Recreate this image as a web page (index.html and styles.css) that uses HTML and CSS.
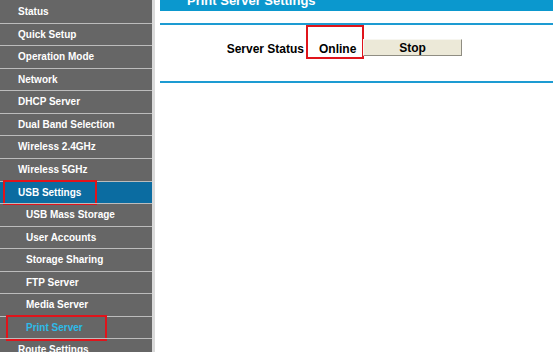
FILE: index.html
```html
<!DOCTYPE html>
<html>

<head>
    <title>Print Server</title>
    <meta name="viewport" content="width=device-width, initial-scale=1">
    <link rel="stylesheet" href="styles.css">
</head>

<body>

<div class="page">
    <!-- left menu -->
    <ul class="menu">
        <li>Status</li>
        <li>Quick Setup</li>
        <li>Operation Mode</li>
        <li>Network</li>
        <li>DHCP Server</li>
        <li>Dual Band Selection</li>
        <li>Wireless 2.4GHz</li>
        <li>Wireless 5GHz</li>
        <li class="active">USB Settings<span class="mark mark-usb"></span></li>
        <li class="sub">USB Mass Storage</li>
        <li class="sub">User Accounts</li>
        <li class="sub">Storage Sharing</li>
        <li class="sub">FTP Server</li>
        <li class="sub">Media Server</li>
        <li class="sub current">Print Server<span class="mark mark-print"></span></li>
        <li>Route Settings</li>
    </ul>

    <!-- main content -->
    <div class="main">
        <div class="title"><span>Print Server Settings</span></div>
        <div class="rule"></div>
        <div class="row">
            <span class="label">Server Status</span>
            <span class="state">Online</span>
            <input type="button" class="btn" value="Stop">
        </div>
        <div class="rule"></div>
    </div>
</div>

</body>
</html>
```

FILE: styles.css
```css
* {
  box-sizing: border-box;
}

body {
  margin: 0;
  font-family: "Liberation Sans", Arial, sans-serif;
  font-weight: bold;
  background: #fff;
  overflow: hidden;
}

.page {
  display: flex;
  align-items: flex-start;
}

.menu {
  list-style: none;
  margin: 0;
  padding: 0;
  width: 155px;
  flex: none;
  background: #666;
  border-right: 3px solid #dadada;
}

.menu li {
  position: relative;
  height: 22.57px;
  line-height: 22px;
  padding-left: 18px;
  border-top: 1px solid #bcbcbc;
  color: #fff;
  font-size: 10px;
  white-space: nowrap;
}

.menu li:first-child {
  border-top-color: #666;
}

.menu li.sub {
  padding-left: 26px;
}

.menu li.active {
  background: #0b6ca1;
}

.menu li.current {
  color: #2dbbe9;
}

/* red marks drawn over the screenshot */
.mark {
  position: absolute;
  border: 2px solid #e0141b;
}

.mark-usb {
  left: 3px;
  top: -2px;
  width: 94px;
  height: 25px;
}

.mark-print {
  left: 6px;
  top: -2px;
  width: 101px;
  height: 26px;
}

.main {
  flex: 1;
  padding-left: 5px;
}

.title {
  height: 11px;
  overflow: hidden;
  background: #0b98ce;
  color: #fff;
  font-size: 13px;
  padding-left: 27px;
}

.title span {
  display: block;
  line-height: 16px;
  margin-top: -7px;
}

.rule {
  height: 2px;
  margin-top: 12px;
  background: #1d9bd2;
}

.row + .rule {
  margin-top: 0;
}

.row {
  display: flex;
  align-items: flex-start;
  height: 56px;
  font-size: 12px;
  color: #000;
}

.label {
  width: 144px;
  text-align: right;
  margin-top: 17px;
  line-height: 14px;
}

.state {
  margin-left: 2px;
  padding: 15px 5px 1px 11px;
  width: 58px;
  height: 34px;
  line-height: 14px;
  border: 2px solid #e0141b;
}

.btn {
  margin-left: -1px;
  margin-top: 14px;
  width: 99px;
  height: 17px;
  padding: 0;
  font-family: "Liberation Sans", Arial, sans-serif;
  font-weight: bold;
  font-size: 12px;
  color: #000;
  background: #ece9d8;
  border: 1px solid;
  border-color: #f7f6f0 #8f8d82 #8f8d82 #f7f6f0;
}
```
